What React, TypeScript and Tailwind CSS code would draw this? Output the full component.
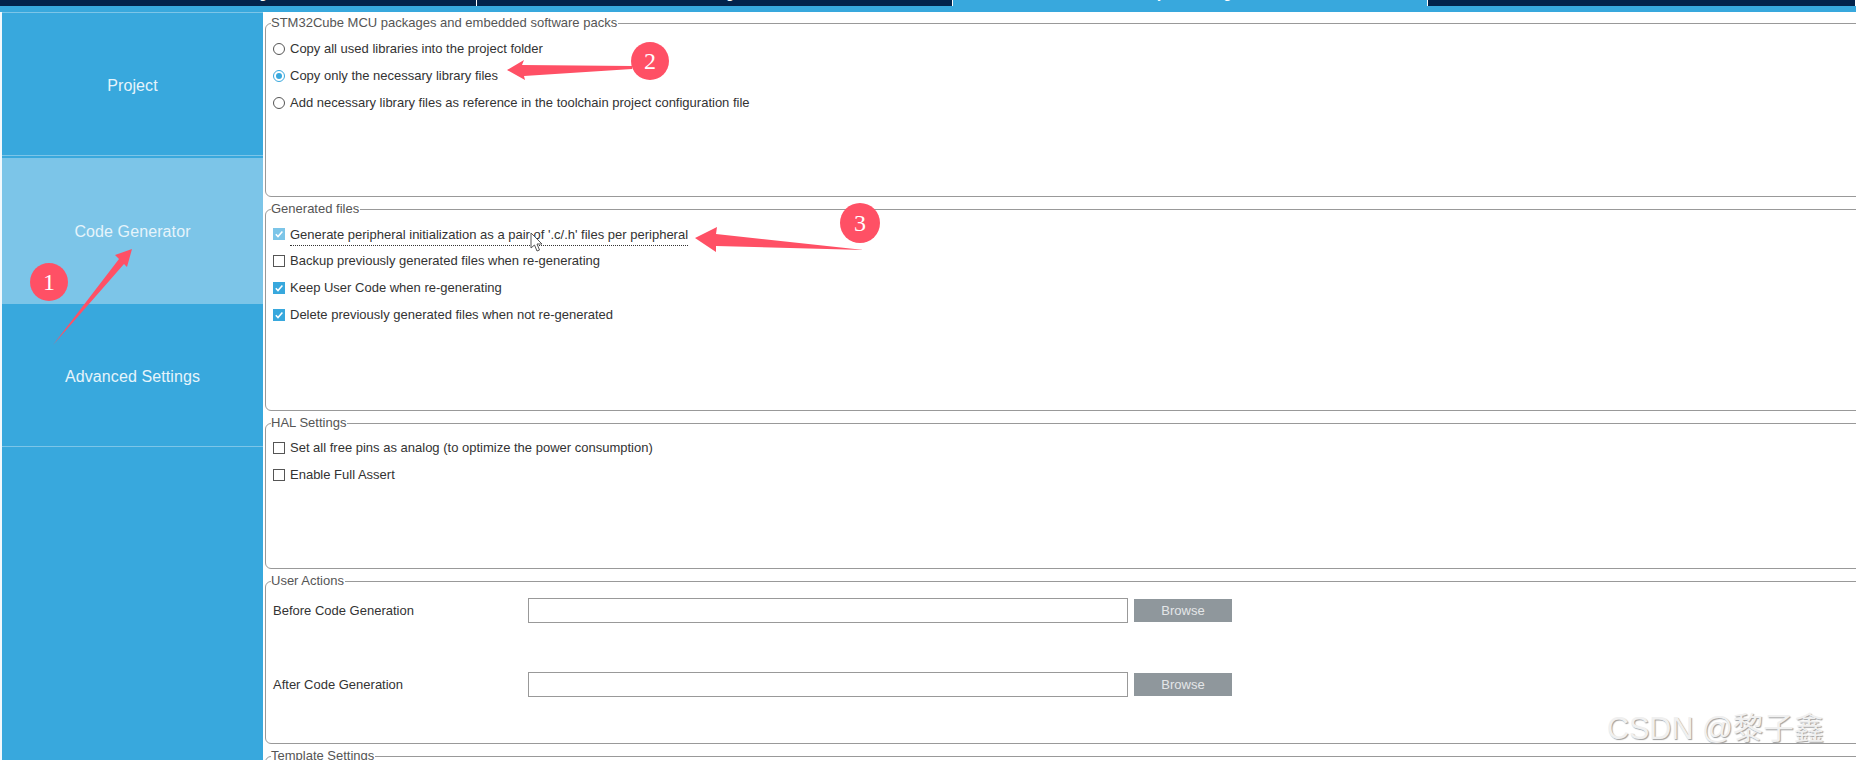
import type { ReactNode } from "react";

const tabs = [
  { label: "Pinout & Configuration", width: "w-[477px]", active: false },
  { label: "Clock Configuration", width: "w-[476px]", active: false },
  { label: "Project Manager", width: "w-[475px]", active: true },
  { label: "Tools", width: "flex-1", active: false },
];

function Radio({ checked, label }: { checked?: boolean; label: string }) {
  return (
    <div className="flex h-[27px] items-center gap-[5px]">
      <span
        className={`flex h-[12px] w-[12px] shrink-0 items-center justify-center rounded-full border ${
          checked ? "border-[#38a8dd]" : "border-[#555]"
        }`}
      >
        {checked && <span className="h-[6px] w-[6px] rounded-full bg-[#38a8dd]" />}
      </span>
      <span>{label}</span>
    </div>
  );
}

function Checkbox({
  state,
  label,
  dotted,
}: {
  state?: "on" | "disabled";
  label: string;
  dotted?: boolean;
}) {
  return (
    <div className="flex h-[27px] items-center gap-[5px]">
      <span
        className={`flex h-[12px] w-[12px] shrink-0 items-center justify-center ${
          state === "on"
            ? "bg-[#38a8dd]"
            : state === "disabled"
              ? "bg-[#7cc5e8]"
              : "border border-[#555]"
        }`}
      >
        {state && (
          <svg viewBox="0 0 12 12" className="h-[12px] w-[12px]" fill="none">
            <path d="M2.8 6.2 5 8.6 9.4 3.4" stroke="#fff" strokeWidth="1.5" />
          </svg>
        )}
      </span>
      <span className={dotted ? "border-b border-dotted border-[#333] leading-[20px] -mb-[3px]" : ""}>{label}</span>
    </div>
  );
}

function Section({
  title,
  height,
  children,
}: {
  title: string;
  height: string;
  children?: ReactNode;
}) {
  return (
    <fieldset className={`${height} shrink-0 rounded-[6px] border border-[#999] pl-[7px]`}>
      <legend className="-ml-[2px] pr-[1px] leading-[14px] text-[#555]">{title}</legend>
      {children}
    </fieldset>
  );
}

function ActionRow({ label }: { label: string }) {
  return (
    <div className="flex h-[25px] items-center">
      <span className="w-[255px] shrink-0">{label}</span>
      <span className="h-[25px] w-[600px] shrink-0 border border-[#999] bg-white" />
      <button className="ml-[6px] h-[23px] w-[98px] shrink-0 bg-[#8f979c] text-[#e4e6e8]">Browse</button>
    </div>
  );
}

function SideItem({
  label,
  height,
  active,
  offset,
}: {
  label: string;
  height: string;
  active?: boolean;
  offset?: string;
}) {
  return (
    <div
      className={`${height} ${offset ?? ""} flex items-center justify-center text-[16px] tracking-[0.1px] text-[#e6f4fb] ${
        active ? "bg-[#7cc5e8]" : "border-b border-[#7cc5e8]"
      }`}
    >
      {label}
    </div>
  );
}

export default function App() {
  return (
    <div className="relative h-[760px] w-[1856px] overflow-hidden bg-white font-['Liberation_Sans',sans-serif] text-[13px] text-[#333]">
      {/* tab strip, cut off at the top of the shot */}
      <div className="flex h-[6px] bg-[#03234b] text-[15px] text-white">
        {tabs.map((tab) => (
          <div
            key={tab.label}
            className={`${tab.width} flex justify-center overflow-hidden border-r border-white ${
              tab.active ? "bg-[#38a8dd]" : ""
            }`}
          >
            <span className="-mt-[16px] block leading-[18px]">{tab.label}</span>
          </div>
        ))}
      </div>
      <div className="h-[6px] bg-[#38a8dd]" />

      <div className="flex h-[748px]">
        <aside className="flex w-[263px] shrink-0 flex-col border-l-2 border-[#f2f9fd] bg-[#38a8dd]">
          <div className="h-px bg-[#7cc5e8]" />
          <SideItem label="Project" height="h-[143px]" offset="pt-[3px]" />
          <div className="h-[2px]" />
          <SideItem label="Code Generator" height="h-[146px]" offset="pt-[1px]" active />
          <SideItem label="Advanced Settings" height="h-[143px]" offset="pt-[4px]" />
        </aside>

        <main className="min-w-0 flex-1 overflow-hidden pl-[2px] pt-[4px]">
          <div className="flex w-[1600px] flex-col gap-[5px]">
            <Section title="STM32Cube MCU packages and embedded software packs" height="h-[181px]">
              <div className="pt-[5px]">
                <Radio label="Copy all used libraries into the project folder" />
                <Radio checked label="Copy only the necessary library files" />
                <Radio label="Add necessary library files as reference in the toolchain project configuration file" />
              </div>
            </Section>
            <Section title="Generated files" height="h-[209px]">
              <div className="pt-[4px]">
                <Checkbox state="disabled" dotted label="Generate peripheral initialization as a pair of '.c/.h' files per peripheral" />
                <Checkbox label="Backup previously generated files when re-generating" />
                <Checkbox state="on" label="Keep User Code when re-generating" />
                <Checkbox state="on" label="Delete previously generated files when not re-generated" />
              </div>
            </Section>
            <Section title="HAL Settings" height="h-[153px]">
              <div className="pt-[4px]">
                <Checkbox label="Set all free pins as analog (to optimize the power consumption)" />
                <Checkbox label="Enable Full Assert" />
              </div>
            </Section>
            <Section title="User Actions" height="h-[170px]">
              <div className="flex flex-col gap-[49px] pt-[10px]">
                <ActionRow label="Before Code Generation" />
                <ActionRow label="After Code Generation" />
              </div>
            </Section>
            <Section title="Template Settings" height="h-[100px]" />
          </div>
        </main>
      </div>

      {/* red annotations pasted over the shot */}
      <svg className="pointer-events-none absolute inset-0 h-[760px] w-[1856px]" viewBox="0 0 1856 760" fill="#ff5065">
        <polygon points="53,345 119,259 115,255 132,249 127,267 124,264" />
        <polygon points="507,70 524,60 522,65 632,66 632,69 524,76 525,80" />
        <polygon points="695,238 717,227 716,234 864,250 716,246 716,252" />
        <path d="M531 233v15l3.5-3 2.5 6 2.5-1-2.5-6h5z" fill="#fff" stroke="#555" strokeWidth="1" />
      </svg>
      <div className="absolute left-[30px] top-[263px] flex h-[38px] w-[38px] items-center justify-center rounded-full bg-[#ff5065] font-['Liberation_Serif',serif] text-[24px] text-white">
        1
      </div>
      <div className="absolute left-[631px] top-[42px] flex h-[38px] w-[38px] items-center justify-center rounded-full bg-[#ff5065] font-['Liberation_Serif',serif] text-[24px] text-white">
        2
      </div>
      <div className="absolute left-[840px] top-[203px] flex h-[40px] w-[40px] items-center justify-center rounded-full bg-[#ff5065] font-['Liberation_Serif',serif] text-[24px] text-white">
        3
      </div>

      <div className="absolute left-[1607px] top-[708px] font-['Liberation_Sans','Noto_Sans_CJK_SC',sans-serif] text-[30.5px] leading-[40px] text-[#f0f0f0] [text-shadow:1px_1px_1px_#a0a0a0]">
        CSDN @黎子鑫
      </div>
    </div>
  );
}
